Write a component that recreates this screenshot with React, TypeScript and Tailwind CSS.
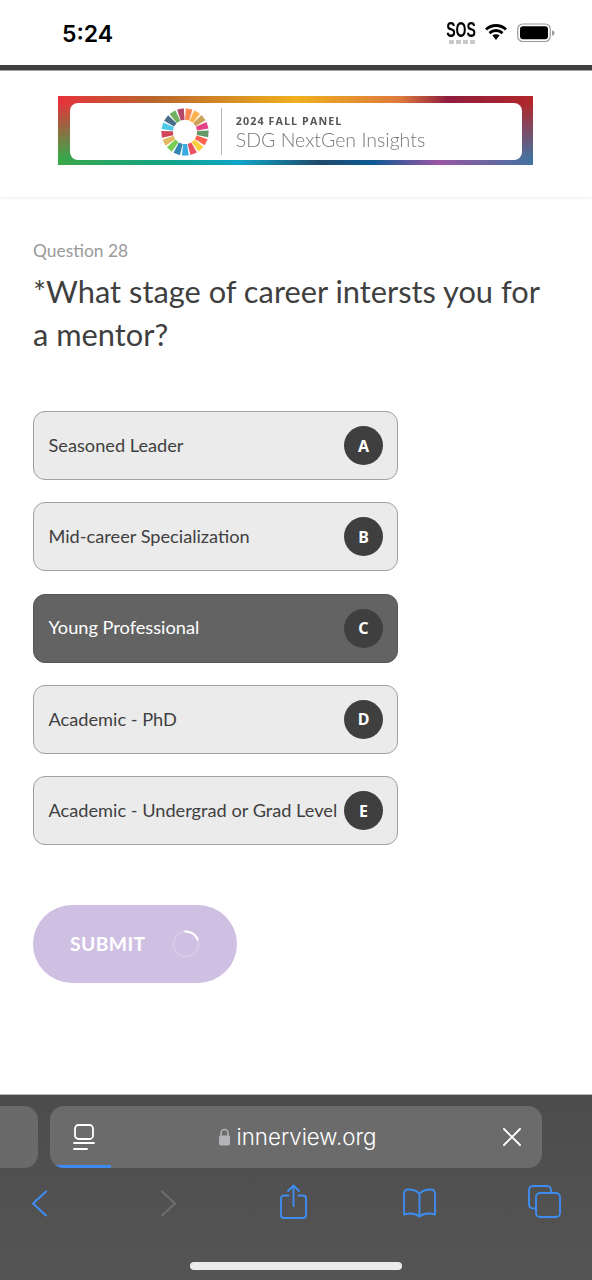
const font = { fontFamily: '"Noto Sans", sans-serif' };

const options = [
  { label: "Seasoned Leader", key: "A" },
  { label: "Mid-career Specialization", key: "B" },
  { label: "Young Professional", key: "C", active: true },
  { label: "Academic - PhD", key: "D" },
  { label: "Academic - Undergrad or Grad Level", key: "E" },
];

const sdg = ["#e5243b","#dda63a","#4c9f38","#c5192d","#ff3a21","#26bde2","#fcc30b","#a21942","#fd6925","#dd1367","#fd9d24","#bf8b2e","#3f7e44","#0a97d9","#56c02b","#00689d","#19486a"];
const wheelOrder = [8,10,11,9,12,4,6,0,13,15,14,1,3,5,16,2,7];

function Wheel() {
  return (
    <svg width="48" height="50" viewBox="-24 -25 48 50" className="blur-[0.7px]">
      {wheelOrder.map((c, i) => (
        <path
          key={i}
          d="M-3.400 -23.500 L3.400 -23.500 L2 -12 L-2 -12 Z"
          fill={sdg[c]}
          opacity="0.8"
          transform={`rotate(${(i * 360) / 17 + 10})`}
        />
      ))}
    </svg>
  );
}

function Frame() {
  return (
    <svg className="absolute inset-0 w-full h-full" viewBox="0 0 475 69" preserveAspectRatio="none">
      <defs>
        <linearGradient id="t">
          <stop offset="0" stopColor="#e6323c" />
          <stop offset="0.2" stopColor="#b9652c" />
          <stop offset="0.5" stopColor="#eeb01e" />
          <stop offset="0.72" stopColor="#dd7a3e" />
          <stop offset="0.82" stopColor="#8f1d3d" />
          <stop offset="1" stopColor="#b2272a" />
        </linearGradient>
        <linearGradient id="b">
          <stop offset="0" stopColor="#3ba748" />
          <stop offset="0.25" stopColor="#0ea38d" />
          <stop offset="0.38" stopColor="#10a5c8" />
          <stop offset="0.55" stopColor="#1f4a6b" />
          <stop offset="0.66" stopColor="#0c5a94" />
          <stop offset="0.8" stopColor="#9a55a5" />
          <stop offset="1" stopColor="#43739f" />
        </linearGradient>
        <linearGradient id="f" x1="0" y1="0" x2="0" y2="1">
          <stop offset="0.1" stopColor="#000" />
          <stop offset="0.9" stopColor="#fff" />
        </linearGradient>
        <mask id="m"><rect width="475" height="69" fill="url(#f)" /></mask>
      </defs>
      <rect width="475" height="69" fill="url(#t)" />
      <rect width="475" height="69" fill="url(#b)" mask="url(#m)" />
    </svg>
  );
}

function Battery() {
  return (
    <svg width="38" height="20" viewBox="0 0 38 20">
      <rect x="0.75" y="1" width="32.5" height="17.5" rx="5" fill="none" stroke="#9a9a9a" strokeWidth="1.2" />
      <rect x="3" y="3.2" width="28" height="13" rx="3" fill="#000" />
      <path d="M35 7.500 a2.500 2.500 0 0 1 0 5 Z" fill="#9a9a9a" />
    </svg>
  );
}

export default function App() {
  return (
    <div className="relative flex h-[1280px] w-[592px] flex-col overflow-hidden bg-white" style={font}>
      <div className="flex h-[65px] shrink-0 items-center justify-between pl-[62px] pr-[37px]">
        <span className="pt-[3px] text-[23px] font-semibold leading-none text-black" style={{ fontFamily: '"Inter", sans-serif' }}>5:24</span>
        <div className="flex items-center">
          <div className="mr-[8px] flex w-[29px] flex-col items-center">
            <span className="scale-x-[0.74] scale-y-[1.12] text-[19px] font-bold leading-[17px] text-black" style={{ fontFamily: '"Liberation Sans", sans-serif' }}>SOS</span>
            <div className="mt-[2px] flex gap-[2px]">
              <i className="h-[4px] w-[5px] bg-[#c9c9c9]" />
              <i className="h-[4px] w-[5px] bg-[#c9c9c9]" />
              <i className="h-[4px] w-[5px] bg-[#c9c9c9]" />
              <i className="h-[4px] w-[5px] bg-[#c9c9c9]" />
            </div>
          </div>
          <svg width="24" height="18" viewBox="0 0 24 18" className="mb-[2px] mr-[9px]">
            <path d="M12 4a13 13 0 0 1 9 3.600l2-2.200A16 16 0 0 0 12 1 16 16 0 0 0 1 5.400l2 2.200A13 13 0 0 1 12 4Z" fill="#000" />
            <path d="M12 9a8 8 0 0 1 5.500 2.200l2-2.200A11 11 0 0 0 12 6a11 11 0 0 0-7.500 3l2 2.200A8 8 0 0 1 12 9Z" fill="#000" />
            <path d="M12 11.200a4.600 4.600 0 0 0-3.600 1.400L12 17l3.600-4.400a4.600 4.600 0 0 0-3.600-1.400Z" fill="#000" />
          </svg>
          <Battery />
        </div>
      </div>
      <div className="h-[6px] shrink-0 border-b border-[#a5a5a5] bg-[#3f3f3f]" />

      <header className="flex h-[126px] shrink-0 items-start justify-center pr-[1px] pt-[25px] shadow-[0_1px_4px_rgba(0,0,0,0.08)]">
        <div className="relative h-[69px] w-[475px] p-[7px_11px_5px_12px] blur-[0.3px]">
          <Frame />
          <div className="relative flex h-full items-center justify-center gap-[12px] rounded-[8px] bg-white pr-[6px]">
            <Wheel />
            <div className="h-[47px] w-px bg-[#b8b8b8]" />
            <div className="ml-[2px] mt-[3px] flex flex-col">
              <span className="text-[10.700px] font-bold leading-[12px] tracking-[1.100px] text-[#555]" style={{ fontFamily: '"Open Sans", sans-serif' }}>2024 FALL PANEL</span>
              <span className="text-[19.500px] font-light leading-[25px] text-[#777]" style={{ fontFamily: '"Lato", sans-serif' }}>SDG NextGen Insights</span>
            </div>
          </div>
        </div>
      </header>

      <main className="flex flex-1 flex-col pl-[33px] pt-[42px]">
        <p className="text-[17.400px] leading-[24px] text-[#9a9a9a]" style={{ fontFamily: '"Lato", sans-serif' }}>Question 28</p>
        <h1 className="mt-[7px] w-[520px] text-[30.800px] leading-[43px] text-[#3f3f3f]" style={{ fontFamily: '"Lato", sans-serif' }}>
          *What stage of career intersts you for a mentor?
        </h1>
        <div className="mt-[55px] flex w-[365px] flex-col gap-[22.250px]">
          {options.map((o) => (
            <div
              key={o.key}
              className={`flex h-[69px] items-center justify-between rounded-[12px] border-[1.500px] pl-[14.500px] pr-[14px] ${o.active ? "border-[#555] bg-[#636363] text-white" : "border-[#a0a0a0] bg-[#ebebeb] text-[#3f3f3f]"}`}
            >
              <span className="whitespace-nowrap text-[18.200px]" style={{ fontFamily: '"Lato", sans-serif' }}>{o.label}</span>
              <span className="flex h-[39px] w-[39px] shrink-0 items-center justify-center rounded-full bg-[#3f3f3f] text-[16px] font-bold text-white">{o.key}</span>
            </div>
          ))}
        </div>
        <div className="mt-[60px] flex h-[78px] w-[203.500px] items-center rounded-full bg-[#cfc0e3] pl-[37px]">
          <span className="text-[19.300px] font-bold tracking-[0.400px] text-white" style={{ fontFamily: '"Lato", sans-serif' }}>SUBMIT</span>
          <svg width="30" height="30" viewBox="0 0 30 30" className="ml-[25px]">
            <circle cx="15" cy="15" r="12.500" fill="none" stroke="#d7cae8" strokeWidth="2" />
            <path d="M13.500 2.600A12.500 12.500 0 0 1 27 11.500" fill="none" stroke="#fff" strokeWidth="2" />
          </svg>
        </div>
      </main>

      <footer className="relative h-[186px] shrink-0 border-t border-[#bbb] bg-[linear-gradient(#4c4c4c,#555)]">
        <div className="absolute left-[-40px] top-[11px] h-[62px] w-[78px] rounded-[14px] bg-[#6a6a6a]" />
        <div className="absolute left-[50px] top-[11px] flex h-[62px] w-[492px] items-center justify-center overflow-hidden rounded-[14px] bg-[#6b6b6b]">
          <svg width="22" height="28" viewBox="0 0 22 28" className="absolute left-[23px] top-[18px]" fill="none" stroke="#fff" strokeWidth="1.800">
            <rect x="2" y="1" width="18" height="14" rx="3.500" />
            <path d="M1 19h20M1 25h13" strokeLinecap="round" />
          </svg>
          <svg width="13" height="18" viewBox="0 0 13 18" className="ml-[2px] mr-[6px]" fill="#b4b4b8">
            <path d="M3 8V5a3.500 3.500 0 0 1 7 0v3" fill="none" stroke="#b4b4b8" strokeWidth="1.600" />
            <rect x="1" y="7.500" width="11" height="10" rx="2" />
          </svg>
          <span className="text-[22.300px] text-white" style={{ fontFamily: '"Inter", sans-serif', fontWeight: 300 }}>innerview.org</span>
          <svg width="20" height="20" viewBox="0 0 20 20" className="absolute left-[452px] top-[21px]" stroke="#fff" strokeWidth="1.900" strokeLinecap="round">
            <path d="M2 2l16 16M18 2L2 18" />
          </svg>
          <div className="absolute bottom-0 left-0 h-[3px] w-[61px] rounded-bl-[14px] bg-[#3f8cf0]" />
        </div>

        <svg className="absolute left-[28px] top-[94px]" width="24" height="30" viewBox="0 0 24 30" fill="none" stroke="#3f8cf0" strokeWidth="2.100" strokeLinecap="round" strokeLinejoin="round">
          <path d="M18 2.500 5 14.500l13 12" />
        </svg>
        <svg className="absolute left-[156px] top-[94px]" width="24" height="30" viewBox="0 0 24 30" fill="none" stroke="#6e6e6e" strokeWidth="2.100" strokeLinecap="round" strokeLinejoin="round">
          <path d="m6 2.500 13 12-13 12" />
        </svg>
        <svg className="absolute left-[280px] top-[89px]" width="27" height="36" viewBox="0 0 27 36" fill="none" stroke="#3f8cf0" strokeWidth="1.900" strokeLinecap="round" strokeLinejoin="round">
          <path d="M8.500 11.500H4a3 3 0 0 0-3 3V31a3 3 0 0 0 3 3h19a3 3 0 0 0 3-3V14.500a3 3 0 0 0-3-3h-4.500" />
          <path d="M13.500 22V1.500M8 7l5.500-5.500L19 7" />
        </svg>
        <svg className="absolute left-[402px] top-[93px]" width="35" height="30" viewBox="0 0 35 30" fill="none" stroke="#3f8cf0" strokeWidth="1.900" strokeLinecap="round" strokeLinejoin="round">
          <path d="M17.500 6C15 2.500 11 1.500 6 1.500 3.500 1.500 2 3 2 5.500V26.500C7 25 13 25 17.500 28.500 22 25 28 25 33 26.500V5.500C33 3 31.500 1.500 29 1.500 24 1.500 20 2.500 17.500 6ZM17.500 6V28" />
        </svg>
        <svg className="absolute left-[528px] top-[90px]" width="33" height="33" viewBox="0 0 33 33" fill="none" stroke="#3f8cf0" strokeWidth="1.900" strokeLinejoin="round">
          <path d="M7 23.500H5a4 4 0 0 1-4-4V5a4 4 0 0 1 4-4h14a4 4 0 0 1 4 4v2.500" />
          <rect x="8" y="8" width="24" height="24" rx="4" />
        </svg>
        <div className="absolute left-[190px] top-[167px] h-[8px] w-[212px] rounded-full bg-[#ececec]" />
      </footer>
    </div>
  );
}
